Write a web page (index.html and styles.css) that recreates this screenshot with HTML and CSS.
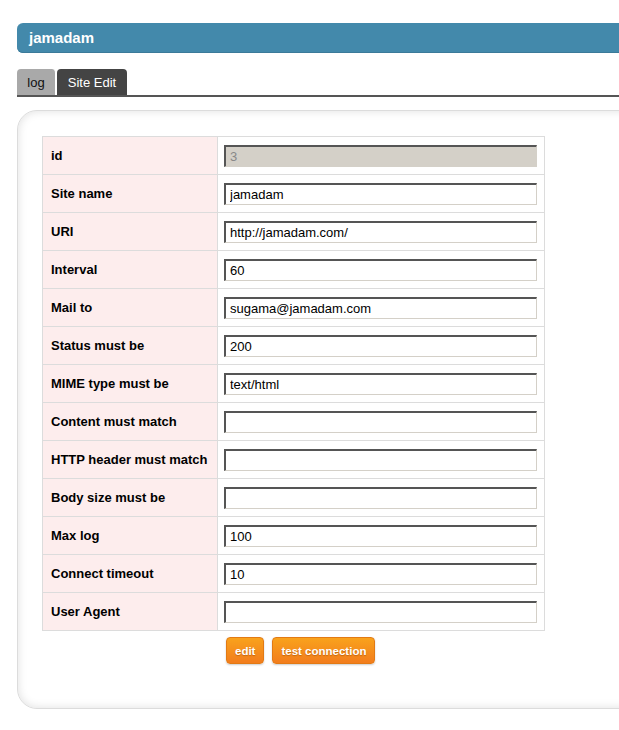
FILE: index.html
```html
<!DOCTYPE html>
<html>
<head>
<meta charset="utf-8">
<link rel="stylesheet" href="styles.css">
</head>
<body>
<div class="page">
  <div class="header">jamadam</div>
  <div class="tabs">
    <span class="tab tab-off">log</span>
    <span class="tab tab-on">Site Edit</span>
  </div>
  <div class="panel">
    <table class="form">
      <tr><th>id</th><td><input class="inp inp-dis" value="3" disabled></td></tr>
      <tr><th>Site name</th><td><input class="inp" value="jamadam"></td></tr>
      <tr><th>URI</th><td><input class="inp" value="http://jamadam.com/"></td></tr>
      <tr><th>Interval</th><td><input class="inp" value="60"></td></tr>
      <tr><th>Mail to</th><td><input class="inp" value="sugama@jamadam.com"></td></tr>
      <tr><th>Status must be</th><td><input class="inp" value="200"></td></tr>
      <tr><th>MIME type must be</th><td><input class="inp" value="text/html"></td></tr>
      <tr><th>Content must match</th><td><input class="inp" value=""></td></tr>
      <tr><th>HTTP header must match</th><td><input class="inp" value=""></td></tr>
      <tr><th>Body size must be</th><td><input class="inp" value=""></td></tr>
      <tr><th>Max log</th><td><input class="inp" value="100"></td></tr>
      <tr><th>Connect timeout</th><td><input class="inp" value="10"></td></tr>
      <tr><th>User Agent</th><td><input class="inp" value=""></td></tr>
    </table>
    <div class="actions">
      <button class="btn">edit</button>
      <button class="btn">test connection</button>
    </div>
  </div>
</div>
</body>
</html>
```
FILE: styles.css
```css
html, body {
  margin: 0;
  padding: 0;
  background: #fff;
  overflow: hidden;
}
body {
  font-family: "Liberation Sans", Arial, sans-serif;
  color: #000;
}
.page {
  padding: 23px 0 0 17px;
  width: 640px;
}
.header {
  height: 30px;
  line-height: 30px;
  background: #4389ab;
  color: #fff;
  font-weight: bold;
  font-size: 15px;
  padding-left: 12px;
  border-radius: 6px 0 0 6px;
  box-shadow: inset 0 -1px 0 #3b7a99;
}
.tabs {
  margin-top: 16px;
  display: flex;
  gap: 1px;
  border-bottom: 2px solid #555;
  height: 26px;
  align-items: flex-end;
}
.tab {
  height: 26px;
  line-height: 27px;
  font-size: 13px;
  border-radius: 4px 4px 0 0;
  box-sizing: border-box;
  padding: 0;
  text-align: center;
}
.tab-off {
  background: #a9a9a9;
  color: #111;
  width: 39px;
  border-right: 1px solid #fff;
}
.tab-on {
  background: #444;
  color: #fff;
  width: 70px;
}
.panel {
  margin-top: 13px;
  border: 1px solid #dcdcdc;
  border-radius: 20px;
  box-shadow: inset 0 0 10px rgba(0,0,0,0.13);
  padding: 25px 0 44px 24px;
}
.form {
  border-collapse: collapse;
  width: 503px;
}
.form th, .form td {
  border: 1px solid #dcdcdc;
  height: 37px;
  padding: 0;
}
.form th {
  background: #fdeded;
  text-align: left;
  font-size: 13px;
  font-weight: bold;
  padding-left: 8px;
  width: 166px;
}
.form td {
  padding-left: 6px;
}
.inp {
  display: block;
  box-sizing: border-box;
  width: 313px;
  height: 22px;
  margin: 0;
  padding: 0 4px;
  font-family: "Liberation Sans", Arial, sans-serif;
  font-size: 13px;
  color: #000;
  background: #fff;
  border-style: solid;
  border-width: 2px 1px 1px 2px;
  border-color: #555 #d4d0c8 #d4d0c8 #555;
  outline: none;
}
.inp-dis {
  background: #d4d0c8;
  color: #888;
}
.actions {
  display: flex;
  gap: 8px;
  margin: 6px 0 0 184px;
}
.btn {
  height: 27px;
  padding: 0 8px;
  border: 1px solid #e27a14;
  border-radius: 4px;
  background: linear-gradient(#f9a21c, #f27d1d);
  color: #fff;
  font-family: "Liberation Sans", Arial, sans-serif;
  font-size: 11.5px;
  font-weight: bold;
  text-shadow: 0 1px 1px rgba(150,70,0,0.5);
  box-shadow: 0 1px 2px rgba(0,0,0,0.2);
}
```
